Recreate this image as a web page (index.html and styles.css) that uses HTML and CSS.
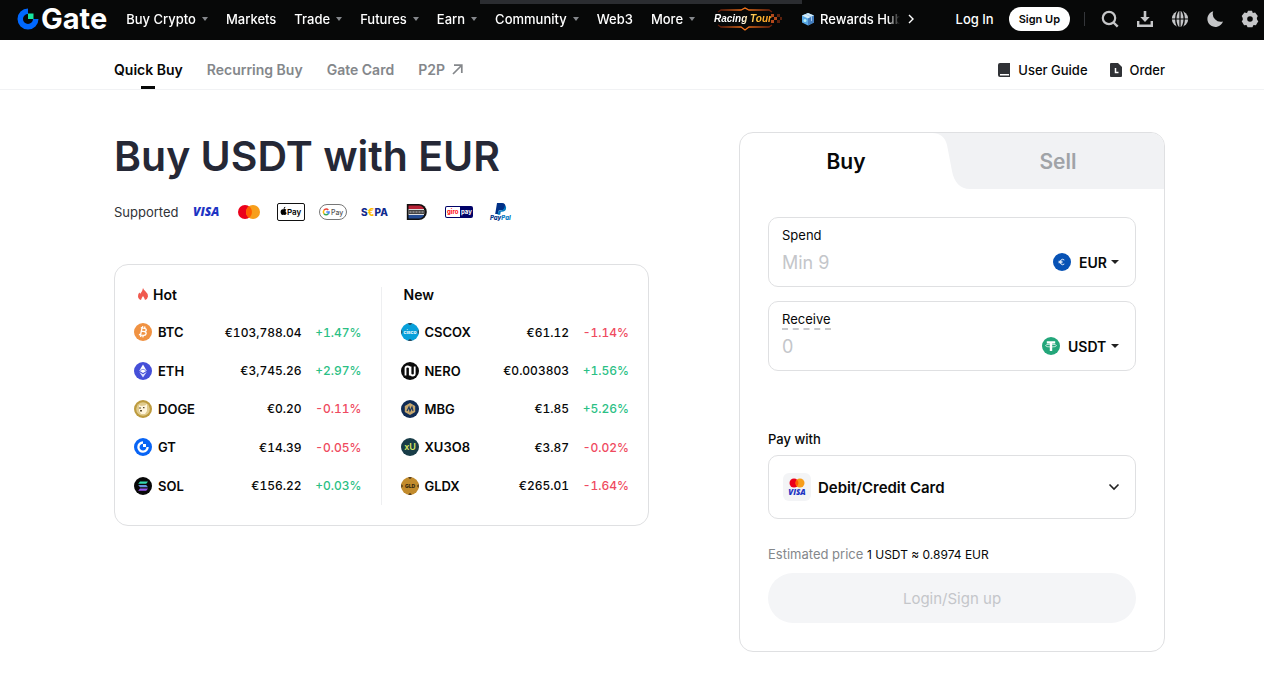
FILE: index.html
```
<!DOCTYPE html>
<html lang="en">
<head>
  <meta charset="UTF-8">
  <meta name="viewport" content="width=device-width, initial-scale=1.0">
  <title>Buy USDT with EUR | Gate</title>
  <link rel="stylesheet" href="styles.css">
</head>
<body>
  <header class="topbar">
    <div class="notch"></div>
    <a class="logo" href="#">
      <svg width="22" height="22" viewBox="0 0 22 22"><path d="M11 0.5A10.5 10.5 0 1 0 21.5 11H16A5 5 0 1 1 11 6z" fill="#0068ff"/><path d="M11 5.5h5.5V11H11z" fill="#17e6a1"/></svg>
      <span>Gate</span>
    </a>
    <nav class="main-nav">
      <button>Buy Crypto <i class="caret"></i></button>
      <a href="#">Markets</a>
      <button>Trade <i class="caret"></i></button>
      <button>Futures <i class="caret"></i></button>
      <button>Earn <i class="caret"></i></button>
      <button>Community <i class="caret"></i></button>
      <a href="#">Web3</a>
      <button>More <i class="caret"></i></button>
      <a class="racing" href="#">
        <svg width="70" height="24" viewBox="0 0 70 24">
          <defs>
            <linearGradient id="fire" x1="0" x2="1" y1="0" y2="0"><stop offset="0" stop-color="#5a1608"/><stop offset=".5" stop-color="#ff7a1c"/><stop offset="1" stop-color="#6a1c08"/></linearGradient>
            <linearGradient id="gold" x1="0" x2="1" y1="0" y2="0"><stop offset="0" stop-color="#fff"/><stop offset=".45" stop-color="#fff"/><stop offset=".7" stop-color="#ffc23a"/><stop offset="1" stop-color="#ff9a20"/></linearGradient>
          </defs>
          <path d="M5 5l3-2h20l4-2 4 2h20l3 2M5 18l3 2h20l4 3 4-3h20l3-2" fill="none" stroke="url(#fire)" stroke-width="1.3"/>
          <text class="racing-text" x="1" y="15" fill="url(#gold)">Racing Tour</text>
          <path d="M58 7h3v3h-3zM61 10h3v3h-3zM58 13h3v3h-3z" fill="#b3481b"/>
          <path d="M64 7h3v3h-3zM67 10h2v3h-2zM64 13h3v3h-3z" fill="#5c210d"/>
        </svg>
      </a>
      <a class="rewards" href="#">
        <svg width="14" height="14" viewBox="0 0 14 14"><path d="M7 1l6 2.500v7L7 13.500 1 10.500v-7z" fill="#58a9e8"/><path d="M7 1l6 2.500L7 6.500 1 3.500z" fill="#d3ecf8"/><path d="M7 6.500v7l6-3v-7z" fill="#427bbb"/><path d="M4 2.300l6 3v4l1-.5v-4L5 2z" fill="#a5c9ed"/><circle cx="4" cy="8.500" r="1.500" fill="#b8f0f5"/></svg>
        Rewards Hub
      </a>
    </nav>
    <button class="nav-next" aria-label="More links">
      <svg width="8" height="10" viewBox="0 0 8 10"><path d="M2 1l4 4-4 4" fill="none" stroke="#fff" stroke-width="1.4"/></svg>
    </button>
    <div class="account">
      <a href="#">Log In</a>
      <button class="signup">Sign Up</button>
      <span class="divider"></span>
      <div class="tools">
        <button aria-label="Search"><svg width="18" height="18" viewBox="0 0 18 18"><circle cx="8" cy="8" r="6.200" fill="none" stroke="#c5c6c8" stroke-width="2.200"/><path d="M12.500 12.500l4.200 4.200" stroke="#c5c6c8" stroke-width="2.400"/></svg></button>
        <button aria-label="Download"><svg width="18" height="18" viewBox="0 0 18 18"><path d="M7.700 1h2.600v6h3.400L9 12 4.300 7h3.400z" fill="#c5c6c8"/><path d="M2.200 11v4.800h13.600V11" fill="none" stroke="#c5c6c8" stroke-width="2.400"/></svg></button>
        <button aria-label="Language"><svg width="18" height="18" viewBox="0 0 18 18"><circle cx="9" cy="9" r="8.200" fill="#c5c6c8"/><ellipse cx="9" cy="9" rx="4.200" ry="9" fill="none" stroke="#070808" stroke-width="1.400"/><path d="M0 9h18M9 0v18" stroke="#070808" stroke-width="1.200"/></svg></button>
        <button aria-label="Dark mode"><svg width="18" height="18" viewBox="0 0 18 18"><path d="M7.200 1.200A8 8 0 1 0 17 11.400 8 8 0 0 1 7.200 1.200z" fill="#c5c6c8"/></svg></button>
        <button aria-label="Settings"><svg width="18" height="18" viewBox="0 0 18 18"><path d="M7 .7h4l.8 2.200 2.300-.3 2.700 3.500-1 1.900.4 2 1.100 1.300-2.400 4-2.400-.3-1.100 2.300H6.600L5.500 15l-2.400.3-2.400-4L1.800 10l-.1-2-1-1.900 2.700-3.500 2.600.3z" fill="#c5c6c8"/><circle cx="9" cy="9" r="2.800" fill="#070808"/></svg></button>
      </div>
    </div>
  </header>

  <div class="subnav">
    <nav class="subnav-tabs">
      <a class="active" href="#">Quick Buy</a>
      <a href="#">Recurring Buy</a>
      <a href="#">Gate Card</a>
      <a href="#">P2P <svg width="11" height="11" viewBox="0 0 11 11"><path d="M1 10L9.500 1.500M2 1.200h7.800V9" fill="none" stroke="#84878b" stroke-width="1.700"/></svg></a>
    </nav>
    <div class="subnav-links">
      <a href="#"><svg width="14" height="14" viewBox="0 0 14 14"><path d="M3 0h10v14H3a2 2 0 0 1-2-2V2a2 2 0 0 1 2-2z" fill="#303236"/><path d="M3 11h9v1.500H3z" fill="#fff"/></svg> User Guide</a>
      <a href="#"><svg width="14" height="14" viewBox="0 0 14 14"><path d="M2 0h7l4 4v9a1 1 0 0 1-1 1H2a1 1 0 0 1-1-1V1a1 1 0 0 1 1-1z" fill="#303236"/><path d="M6.500 5v4.500h3" fill="none" stroke="#fff" stroke-width="1.500"/></svg> Order</a>
    </div>
  </div>

  <main class="content">
    <section class="intro">
      <h1>Buy USDT with EUR</h1>
      <div class="supported">
        <span class="supported-label">Supported</span>
        <svg width="28" height="18" viewBox="0 0 28 18"><text class="visa" x="0" y="13" fill="#1d34c4">VISA</text></svg>
        <svg width="28" height="18" viewBox="0 0 28 18"><circle cx="10" cy="9" r="7" fill="#eb001b"/><circle cx="18" cy="9" r="7" fill="#f79e1b"/><path d="M14 3.300a7 7 0 0 1 0 11.400 7 7 0 0 1 0-11.400z" fill="#ff5f00"/></svg>
        <svg width="28" height="18" viewBox="0 0 28 18"><rect x=".5" y=".5" width="27" height="17" rx="1.500" fill="#fff" stroke="#111"/><path d="M6.700 6.300c.8-.5 2-.4 2.700.5-1.200.8-1 2.700.3 3.200-.5 1.300-1.300 2.300-2.200 1.900-.6-.3-1-.3-1.600 0C4.300 12.400 2.900 9 4 7.200c.7-1.100 1.800-1.200 2.700-.9zM6.600 6c0-1.200.8-2 1.700-2.200C8.400 5 7.700 5.900 6.600 6z"/><text class="pay" x="10" y="12">Pay</text></svg>
        <svg width="28" height="18" viewBox="0 0 28 18"><rect x=".5" y="1.500" width="27" height="15" rx="7.500" fill="#fff" stroke="#777"/><g fill="none" stroke-width="1.500"><path d="M9.300 7A2.800 2.800 0 0 0 5 7.200" stroke="#ea4335"/><path d="M5 7.200a3 3 0 0 0 0 3.600" stroke="#fbbc04"/><path d="M5 10.800a2.800 2.800 0 0 0 4.200 0" stroke="#34a853"/><path d="M7.300 9h2.800q0 1-.8 1.900" stroke="#4285f4"/></g><text class="gpay" x="12" y="12" fill="#555">Pay</text></svg>
        <svg width="28" height="18" viewBox="0 0 28 18"><text class="sepa" x="0" y="13" fill="#10298e">S<tspan fill="#ffbe00">€</tspan>PA</text></svg>
        <svg width="28" height="18" viewBox="0 0 28 18"><path d="M3.800 1h12a7.500 7.500 0 0 1 0 16h-12z" fill="#111"/><path d="M5.500 2.500H16q3.500.2 5 3.500H5.500z" fill="#b82236"/><path d="M5.500 12H21q-1.500 3.300-5 3.500H5.500z" fill="#254d94"/><path d="M5.500 6h15.500v6H5.500z" fill="#ddd"/><path d="M5.500 7h16.500v4H5.500z" fill="#444"/><path d="M6.500 9h14" stroke="#bbb" stroke-dasharray="2 1"/></svg>
        <svg width="28" height="18" viewBox="0 0 28 18"><rect y="3" width="28" height="12" rx="2" fill="#000268"/><path d="M2 4h13v10H2a1 1 0 0 1-1-1V5a1 1 0 0 1 1-1z" fill="#fff"/><text class="giro" x="2" y="11" fill="#ff0007">giro</text><text class="giro" x="16" y="11" fill="#fff">pay</text></svg>
        <svg width="28" height="18" viewBox="0 0 28 18"><path d="M10 0h5q4 .3 3.300 4-.8 3.500-4.700 3.500h-1.800L11 11H8.200z" fill="#003087"/><path d="M18 2.500q1.700 1 1 3.500-.8 2.700-4.200 2.700h-1l-.6 3h-2.700l1.200-4h1.500q4 0 4.800-5.200z" fill="#0079c1"/><text class="paypal" x="3" y="17" fill="#003087">Pay<tspan fill="#0079c1">Pal</tspan></text></svg>
      </div>

      <div class="coins">
        <div class="coin-list">
          <h2><svg width="12" height="12" viewBox="0 0 12 12"><path d="M6 0q.7 2 2.400 3.300Q11 5.500 11 8.500 10.600 11 8 12 7.500 10 6 8 4.500 10 4 12 1 11 1 8.200q0-2 1.300-3.700l1 1.200Q5.500 3.500 6 0z" fill="#f05a4f"/></svg> Hot</h2>
          <table>
            <tr>
              <th><span><svg width="18" height="18" viewBox="0 0 18 18"><circle cx="9" cy="9" r="9" fill="#f09242"/><path d="M6.800 4.700l4 .7c2.300.6 1.900 3.100-.4 3.200 2.500.4 2.400 4-.9 3.700l-4.600-.8M8 5l-1.500 7M7.500 8.200l3 .4M8.800 3.200l-.4 1.900M11 3.500l-.4 1.900M7 12l-.4 2M9.200 12.300l-.4 2" fill="none" stroke="#fff" stroke-width="1.300"/></svg> BTC</span></th>
              <td>€103,788.04</td><td class="up">+1.47%</td>
            </tr>
            <tr>
              <th><span><svg width="18" height="18" viewBox="0 0 18 18"><circle cx="9" cy="9" r="9" fill="#454fd8"/><path d="M9 2.500l3.700 6.200L9 11 5.300 8.700z" fill="#fff"/><path d="M5.300 10L9 12.200l3.700-2.200L9 15.500z" fill="#dfe2ff"/><path d="M5.500 8.700L9 7.200l3.500 1.500" fill="none" stroke="#8b91e8"/></svg> ETH</span></th>
              <td>€3,745.26</td><td class="up">+2.97%</td>
            </tr>
            <tr>
              <th><span><svg width="18" height="18" viewBox="0 0 18 18"><circle cx="9" cy="9" r="9" fill="#bd9b3e"/><circle cx="9" cy="9" r="6.800" fill="#e0cb8d"/><path d="M5 5l2 1 4-.5 2-1.500v7l-2 3H7l-2-3z" fill="#fff5dc"/><path d="M5.500 7h1v2h-1zM9 7h1.500v1.300H9zM6 10h2v1.500H6z" fill="#594a2b"/></svg> DOGE</span></th>
              <td>€0.20</td><td class="down">-0.11%</td>
            </tr>
            <tr>
              <th><span><svg width="18" height="18" viewBox="0 0 18 18"><circle cx="9" cy="9" r="9" fill="#0864f5"/><path d="M9 4.500A4.600 4.600 0 1 0 13.600 9" fill="none" stroke="#fff" stroke-width="2.300"/><path d="M9 6h3v3H9z" fill="#fff"/></svg> GT</span></th>
              <td>€14.39</td><td class="down">-0.05%</td>
            </tr>
            <tr>
              <th><span><svg width="18" height="18" viewBox="0 0 18 18"><circle cx="9" cy="9" r="9" fill="#080808"/><path d="M6 4.500h8l-1.800 2.200H4.200z" fill="#33d9b0"/><path d="M4.200 8h8l1.800 2.200H6z" fill="#6790df"/><path d="M6 11.500h8l-1.800 2.200H4.200z" fill="#9655ed"/></svg> SOL</span></th>
              <td>€156.22</td><td class="up">+0.03%</td>
            </tr>
          </table>
        </div>
        <div class="coin-list">
          <h2>New</h2>
          <table>
            <tr>
              <th><span><svg width="18" height="18" viewBox="0 0 18 18"><circle cx="9" cy="9" r="9" fill="#08a0da"/><path d="M6.500.4q2.500-.8 5 0L9 2zM6.500 17.600q2.500.8 5 0L9 16zM.3 6.500L1.500 9 .3 11.500zM17.700 6.500L16.500 9l1.200 2.500z" fill="#274354"/><text class="coin-tiny" x="9" y="11" fill="#fff">cisco</text></svg> CSCOX</span></th>
              <td>€61.12</td><td class="down">-1.14%</td>
            </tr>
            <tr>
              <th><span><svg width="18" height="18" viewBox="0 0 18 18"><circle cx="9" cy="9" r="9" fill="#0b0b0b"/><path d="M4.500 13.500V6.200q0-1.700 2-1.700 2.300 0 2.300 1.700v7.300M9.500 4.500v7.300q0 1.700 2.200 1.700 2 0 2-1.700V4.500" fill="none" stroke="#fff" stroke-width="1.800"/></svg> NERO</span></th>
              <td>€0.003803</td><td class="up">+1.56%</td>
            </tr>
            <tr>
              <th><span><svg width="18" height="18" viewBox="0 0 18 18"><circle cx="9" cy="9" r="9" fill="#102b54"/><path d="M9 3l5.200 3v6L9 15l-5.200-3V6z" fill="#c7a86f"/><path d="M6 11l2-4 1 4 2-4 1 4" fill="none" stroke="#203960" stroke-width="1.200"/></svg> MBG</span></th>
              <td>€1.85</td><td class="up">+5.26%</td>
            </tr>
            <tr>
              <th><span><svg width="18" height="18" viewBox="0 0 18 18"><circle cx="9" cy="9" r="9" fill="#193d48"/><text class="coin-xu" x="9" y="12" fill="#dbea63">xU</text></svg> XU3O8</span></th>
              <td>€3.87</td><td class="down">-0.02%</td>
            </tr>
            <tr>
              <th><span><svg width="18" height="18" viewBox="0 0 18 18"><circle cx="9" cy="9" r="9" fill="#c28b2c"/><path d="M7 .4q2-.7 4 0L9 2zM7 17.600q2 .7 4 0L9 16zM.3 7L2 9 .3 11zM17.700 7L16 9l1.700 2z" fill="#4a3518"/><text class="coin-gld" x="9" y="11" fill="#32240d">GLD</text></svg> GLDX</span></th>
              <td>€265.01</td><td class="down">-1.64%</td>
            </tr>
          </table>
        </div>
      </div>
    </section>

    <section class="trade-card">
      <div class="trade-tabs">
        <button class="tab-buy">Buy</button>
        <button class="tab-sell">
          <svg class="tab-edge" width="40" height="56" viewBox="0 0 40 56"><path d="M0 0c8 0 13 4 15 12l5 26c2 11 8 18 18 18h2V0z" fill="#f1f2f4"/></svg>
          Sell
        </button>
      </div>
      <form class="trade-form">
        <div class="field">
          <label for="spend">Spend</label>
          <div class="field-row">
            <input type="text" id="spend" placeholder="Min 9">
            <svg width="18" height="18" viewBox="0 0 18 18"><circle cx="9" cy="9" r="9" fill="#0752b5"/><path d="M11.300 7A2.600 2.600 0 1 0 11.300 11M5.500 8.300h4M5.500 9.700h4" fill="none" stroke="#fff" stroke-width=".9"/></svg>
            <select aria-label="Spend currency"><option>EUR</option></select>
            <i class="caret dark"></i>
          </div>
        </div>
        <div class="field">
          <label class="hint" for="receive">Receive</label>
          <div class="field-row">
            <input type="text" id="receive" placeholder="0">
            <svg width="18" height="18" viewBox="0 0 18 18"><circle cx="9" cy="9" r="9" fill="#23a67a"/><path d="M4.800 4.200h8.400v2.300h-3V14H7.800V6.500h-3z" fill="#fff"/><ellipse cx="9" cy="8.600" rx="5.500" ry="1.400" fill="none" stroke="#fff" stroke-width=".7"/></svg>
            <select aria-label="Receive currency"><option>USDT</option></select>
            <i class="caret dark"></i>
          </div>
        </div>

        <label class="pay-label" for="pay">Pay with</label>
        <div class="pay-box">
          <svg width="28" height="28" viewBox="0 0 28 28"><rect width="28" height="28" rx="6" fill="#f3f4f6"/><circle cx="11" cy="10" r="4.500" fill="#eb001b"/><circle cx="17" cy="10" r="4.500" fill="#f79e1b"/><path d="M14 6.700a4.500 4.500 0 0 1 0 6.600 4.500 4.500 0 0 1 0-6.600z" fill="#ff5f00"/><text class="visa-small" x="14" y="22" fill="#1d34c4">VISA</text></svg>
          <select id="pay"><option>Debit/Credit Card</option></select>
          <svg class="chevron" width="12" height="8" viewBox="0 0 12 8"><path d="M1.500 1.500L6 6l4.500-4.500" fill="none" stroke="#222" stroke-width="1.600"/></svg>
        </div>

        <p class="estimate">Estimated price <span>1 USDT ≈ 0.8974 EUR</span></p>
        <button class="submit" type="button" disabled>Login/Sign up</button>
      </form>
    </section>
  </main>
</body>
</html>
```
FILE: styles.css
```
* {
  box-sizing: border-box;
}
body {
  margin: 0;
  font-family: Inter, "Liberation Sans", sans-serif;
  font-size: 13px;
  background: #fff;
  color: #070808;
}
a {
  color: inherit;
  text-decoration: none;
}
button,
input,
select {
  font: inherit;
  color: inherit;
  border: none;
  background: none;
  padding: 0;
  margin: 0;
}
button {
  cursor: pointer;
}
svg {
  display: block;
  flex: none;
}
.caret {
  display: inline-block;
  flex: none;
  border: 3px solid transparent;
  border-top: 4px solid #84878b;
  border-bottom: none;
}
.caret.dark {
  border-width: 4px 4px 0;
  border-top-color: #222;
}

/* top bar */
.topbar {
  position: relative;
  display: flex;
  align-items: center;
  height: 40px;
  padding: 0 5px 2px 17px;
  background: #070808;
  color: #fff;
  font-weight: 500;
}
.notch {
  position: absolute;
  top: 0;
  left: 38%;
  width: 322px;
  height: 4px;
  background: #2b2d31;
}
.logo {
  display: flex;
  align-items: center;
  gap: 2px;
  margin-right: 19px;
  font-size: 29px;
  line-height: 36px;
  font-weight: 700;
}
.main-nav {
  display: flex;
  align-items: center;
  flex: 1;
  gap: 18px;
  min-width: 0;
  overflow: hidden;
  white-space: nowrap;
  -webkit-mask-image: linear-gradient(to left, transparent, #000 12px);
  mask-image: linear-gradient(to left, transparent, #000 12px);
}
.main-nav a,
.main-nav button {
  display: flex;
  align-items: center;
  flex: none;
  gap: 6px;
}
.main-nav .rewards {
  gap: 5px;
}
.racing-text {
  font-family: "Liberation Sans Narrow", "Liberation Sans", sans-serif;
  font-size: 10px;
  font-weight: 700;
  font-style: italic;
}
.nav-next {
  margin: 0 41px 0 7px;
}
.account {
  display: flex;
  align-items: center;
}
.signup {
  height: 24px;
  margin-left: 15px;
  padding: 0 10px;
  border-radius: 12px;
  background: #fff;
  color: #070808;
  font-size: 11px;
  font-weight: 600;
}
.divider {
  width: 1px;
  height: 14px;
  margin: 0 16px 0 14px;
  background: #34363a;
}
.tools {
  display: flex;
  gap: 17px;
}

/* second row of links */
.subnav {
  display: flex;
  justify-content: space-between;
  height: 50px;
  padding: 0 99px 0 114px;
  border-bottom: 1px solid #f1f2f4;
}
.subnav-tabs,
.subnav-links {
  display: flex;
  gap: 24px;
}
.subnav a {
  position: relative;
  display: flex;
  align-items: center;
  gap: 7px;
  height: 100%;
  padding-top: 10px;
}
.subnav-tabs a {
  color: #84878b;
  font-size: 14px;
  font-weight: 600;
}
.subnav-tabs .active {
  color: #070808;
}
.subnav-tabs .active::after {
  content: "";
  position: absolute;
  left: 50%;
  bottom: 0;
  width: 14px;
  height: 3px;
  margin-left: -7px;
  background: #070808;
}
.subnav-links {
  gap: 21px;
}
.subnav-links a {
  font-weight: 500;
}

/* main area */
.content {
  display: grid;
  grid-template-columns: minmax(0, 535px) 426px;
  justify-content: space-between;
  align-items: start;
  gap: 40px;
  padding: 42px 99px 22px 114px;
}
h1 {
  margin: 0;
  color: #252836;
  font-size: 41px;
  line-height: 48px;
  font-weight: 600;
}
.supported {
  display: flex;
  align-items: center;
  gap: 14px;
  height: 18px;
  margin-top: 23px;
}
.supported-label {
  color: #303236;
}
.visa {
  font: italic 800 12px "Open Sans", sans-serif;
}
.pay {
  font: 600 8px Inter, sans-serif;
}
.gpay {
  font: 500 7px Inter, sans-serif;
}
.sepa {
  font: 800 10px Inter, sans-serif;
}
.giro {
  font: 700 6px Inter, sans-serif;
}
.paypal {
  font: italic 800 6px Inter, sans-serif;
}

.coins {
  display: grid;
  grid-template-columns: 1fr 1fr;
  margin-top: 43px;
  padding: 22px 0 20px;
  border: 1px solid #dfe0e2;
  border-radius: 14px;
}
.coin-list {
  padding: 0 19px;
}
.coin-list:first-child {
  border-right: 1px solid #eeeff1;
}
.coin-list h2 {
  display: flex;
  align-items: center;
  gap: 4px;
  height: 14px;
  margin: 0 0 12px;
  padding-left: 3px;
  font-size: 14px;
  font-weight: 600;
}
.coin-list table {
  width: 100%;
  height: 192px;
  border-collapse: collapse;
}
.coin-list th,
.coin-list td {
  padding: 0;
  text-align: right;
  font-weight: 500;
}
.coin-list th {
  font-weight: 600;
}
.coin-list td {
  font-size: 12px;
  font-variant-numeric: tabular-nums;
}
.coin-list th span {
  display: flex;
  align-items: center;
  gap: 6px;
}
.coin-list td:last-child {
  width: 60px;
}
.coin-list .up {
  color: #2bbf85;
}
.coin-list .down {
  color: #ef4a60;
}
.coin-tiny,
.coin-xu,
.coin-gld,
.visa-small {
  text-anchor: middle;
}
.coin-tiny {
  font: 700 5px Inter, sans-serif;
}
.coin-xu {
  font: 600 9px Inter, sans-serif;
}
.coin-gld {
  font: 800 5px Inter, sans-serif;
}
.visa-small {
  font: italic 800 8px "Open Sans", sans-serif;
}

/* buy / sell card */
.trade-card {
  overflow: hidden;
  border: 1px solid #dfe0e2;
  border-radius: 14px;
}
.trade-tabs {
  display: grid;
  grid-template-columns: 1fr 1fr;
  height: 56px;
}
.trade-tabs button {
  position: relative;
  font-size: 21px;
  font-weight: 600;
}
.tab-sell {
  background: linear-gradient(to right, transparent 20px, #f1f2f4 20px);
}
.trade-tabs .tab-sell {
  color: #a0a3a7;
}
.tab-edge {
  position: absolute;
  top: 0;
  left: -20px;
}
.trade-form {
  padding: 28px;
}
.field {
  height: 70px;
  margin-bottom: 14px;
  padding: 9px 16px 0 13px;
  border: 1px solid #dfe0e2;
  border-radius: 10px;
}
.field label {
  display: inline-block;
  line-height: 17px;
}
.field .hint {
  border-bottom: 2px dashed #c9cacd;
}
.field-row {
  display: flex;
  align-items: center;
  height: 28px;
  margin-top: 4px;
}
.field:has(.hint) .field-row {
  margin-top: 2px;
}
.field input {
  flex: 1;
  min-width: 0;
  font-size: 18px;
  outline: none;
}
.field input::placeholder {
  color: #c4c6ca;
}
select {
  appearance: none;
  outline: none;
  font-weight: 600;
}
.field select {
  margin: 0 4px 0 8px;
  font-size: 14px;
}
.pay-label {
  display: block;
  margin-top: 60px;
  line-height: 16px;
  font-weight: 500;
}
.pay-box {
  display: flex;
  align-items: center;
  height: 64px;
  margin-top: 8px;
  padding: 0 15px 0 14px;
  border: 1px solid #dfe0e2;
  border-radius: 10px;
}
.pay-box select {
  flex: 1;
  margin-left: 7px;
  font-size: 15px;
}
.estimate {
  margin: 27px 0 10px;
  color: #84878b;
  line-height: 16px;
}
.estimate span {
  color: #070808;
  font-size: 12px;
}
.submit {
  display: block;
  width: 100%;
  height: 50px;
  border-radius: 25px;
  background: #f4f5f7;
  color: #c4c6ca;
  font-size: 15px;
}
```
